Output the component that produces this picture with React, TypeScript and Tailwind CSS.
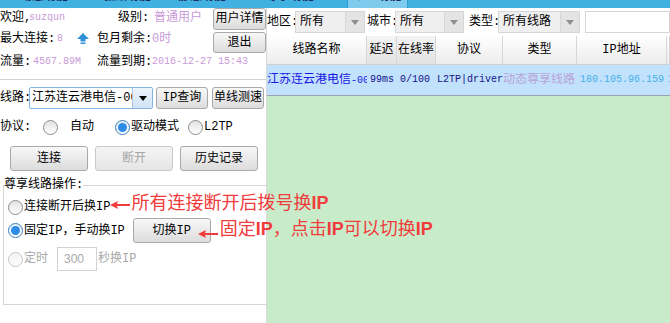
import clsx from "clsx";
import type { ReactNode } from "react";

const mono = "font-['Liberation_Mono','Noto_Sans_CJK_SC',monospace] text-[10px]";
const pink = "text-[#c99ad9]";

function Radio({ checked, disabled }: { checked?: boolean; disabled?: boolean }) {
  return (
    <span
      className={clsx(
        "flex h-[15px] w-[15px] shrink-0 items-center justify-center rounded-full border bg-gradient-to-b",
        disabled
          ? "border-[#c6c6c6] from-[#f3f3f3] to-[#fdfdfd]"
          : checked
            ? "border-[#3a7dbb] from-[#e6f0fb] to-[#ffffff]"
            : "border-[#8d8d8d] from-[#e2e2e2] to-[#ffffff]"
      )}
    >
      {checked && <span className="h-[9px] w-[9px] rounded-full bg-[#2c8ce8]" />}
    </span>
  );
}

function Btn({
  children,
  className,
  disabled,
}: {
  children: ReactNode;
  className?: string;
  disabled?: boolean;
}) {
  return (
    <button
      className={clsx(
        "flex shrink-0 items-center justify-center rounded-[3px] border bg-gradient-to-b text-[12px] leading-none",
        disabled
          ? "border-[#c9c9c9] from-[#f4f4f4] to-[#e6e6e6] text-[#a6a6a6]"
          : "border-[#a9a9a9] from-[#f8f8f8] to-[#dcdcdc] text-black",
        className
      )}
    >
      {children}
    </button>
  );
}

// 红色标注箭头
function RedArrow({ className }: { className?: string }) {
  return (
    <svg className={clsx("relative z-10 shrink-0", className)} width="20" height="8" viewBox="0 0 20 8">
      <polygon points="0,4 8,0 7,3 20,3 20,5 7,5 8,8" fill="#f03c3c" />
    </svg>
  );
}

function UpArrow() {
  return (
    <svg width="12" height="11" viewBox="0 0 12 11">
      <polygon points="6,0 12,6 8.5,6 8.5,8.5 3.5,8.5 3.5,6 0,6" fill="#2f8fd8" />
      <rect x="3.5" y="9.5" width="5" height="1.5" fill="#2f8fd8" />
    </svg>
  );
}

function FilterSelect({ value, width }: { value: string; width: string }) {
  return (
    <div className={clsx("flex h-[22px] shrink-0 border border-[#d6d6d6] bg-[#efefef]", width)}>
      <span className="flex flex-1 items-center pl-[4px] text-[12px]">{value}</span>
      <span className="flex w-[19px] shrink-0 items-center justify-center border-l border-[#d8d8d8] bg-[#e4e4e4]">
        <span className="h-0 w-0 border-x-[4px] border-t-[5px] border-x-transparent border-t-[#8e8e8e]" />
      </span>
    </div>
  );
}

const cols = ["w-[100px]", "w-[30px]", "w-[39px]", "w-[67px]", "w-[74px]", "w-[90px]", "flex-1"];

function Label({ w, children, className }: { w: string; children: ReactNode; className?: string }) {
  return <span className={clsx("shrink-0", w, className)}>{children}</span>;
}

function TopStrip() {
  return (
    <div className="h-[8px] overflow-hidden bg-[#41b1e2]">
      <div className="-mt-[10px] flex h-[18px] items-start text-[12px] font-bold leading-[14px] text-[#1c2c5c]">
        <span className="ml-[20px]">动态功能</span>
        <span className="ml-[35px]">极致功能</span>
        <span className="ml-[27px]">静态功能</span>
        <span className="ml-[40px]">尊享功能</span>
        <span className="ml-[33px] flex h-full w-[61px] justify-center border-x border-[#2f9ad0] bg-[#7ecbee]">
          个人功能
        </span>
      </div>
    </div>
  );
}

function LeftPanel() {
  return (
    <div className="w-[267px] shrink-0 border-r border-[#d9d9d9] bg-white">
      {/* 用户信息 */}
      <div className="flex h-[72px] border-b border-[#d4d4d4]">
        <div className="min-w-0 flex-1">
          <div className="flex h-[19px] items-center">
            <Label w="w-[29px]">欢迎,</Label>
            <Label w="w-[89px]" className={clsx(mono, pink)}>suzqun</Label>
            <Label w="w-[36px]">级别:</Label>
            <span className={pink}>普通用户</span>
          </div>
          <div className="flex h-[23px] items-center">
            <Label w="w-[57px]">最大连接:</Label>
            <Label w="w-[20px]" className={clsx(mono, pink)}>8</Label>
            <Label w="w-[20px]" className="flex">
              <UpArrow />
            </Label>
            <Label w="w-[55px]">包月剩余:</Label>
            <span className={pink}>0时</span>
          </div>
          <div className="flex h-[23px] items-center">
            <Label w="w-[33px]">流量:</Label>
            <Label w="w-[64px]" className={clsx(mono, pink)}>4567.89M</Label>
            <Label w="w-[55px]">流量到期:</Label>
            <span className={clsx(mono, pink)}>2016-12-27 15:43</span>
          </div>
        </div>
        <div className="flex w-[53px] shrink-0 flex-col gap-[2px]">
          <Btn className="h-[22px]">用户详情</Btn>
          <Btn className="h-[21px]">退出</Btn>
        </div>
      </div>

      {/* 线路 */}
      <div className="mt-[7px] flex h-[22px] items-center">
        <Label w="w-[29px]">线路:</Label>
        <div className="flex h-full w-[124px] shrink-0 overflow-hidden rounded-[2px] border border-[#82b4e6] bg-white">
          <span className="flex min-w-0 flex-1 items-center overflow-hidden pl-[2px] text-[12px]">
            江苏连云港电信-00
          </span>
          <span className="flex w-[20px] shrink-0 items-center justify-center border-l border-[#a8c8e8] bg-gradient-to-b from-[#eef5fc] to-[#cfe2f5]">
            <span className="h-0 w-0 border-x-[4px] border-t-[5px] border-x-transparent border-t-black" />
          </span>
        </div>
        <Btn className="ml-[3px] h-full w-[52px]">IP查询</Btn>
        <Btn className="ml-[4px] h-full w-[52px]">单线测速</Btn>
      </div>

      {/* 协议 */}
      <div className="mt-[9px] flex h-[18px] items-center">
        <Label w="w-[43px]">协议:</Label>
        <Radio />
        <Label w="w-[45px]" className="ml-[12px]">自动</Label>
        <Radio checked />
        <Label w="w-[57px]" className="ml-[1px]">驱动模式</Label>
        <Radio />
        <span className="ml-[1px]">L2TP</span>
      </div>

      <div className="mt-[10px] flex h-[25px] gap-[7px] pl-[10px]">
        <Btn className="h-full w-[78px]">连接</Btn>
        <Btn className="h-full w-[78px]" disabled>
          断开
        </Btn>
        <Btn className="h-full w-[78px]">历史记录</Btn>
      </div>

      {/* 尊享线路操作 */}
      <fieldset className="mt-[7px] ml-[3px] h-[127px] w-[260px] border border-[#d5d5d5]">
        <legend className="text-[12px] leading-[14px]">尊享线路操作:</legend>
        <div className="mt-[5px] flex h-[20px] items-center pl-[4px]">
          <Radio />
          <span className="ml-[1px] shrink-0">连接断开后换IP</span>
          <RedArrow className="-mt-[4px]" />
          <span className="relative z-10 -mt-[8px] ml-[1px] shrink-0 font-['Liberation_Sans','Noto_Sans_CJK_SC',sans-serif] text-[18px] leading-[22px] text-[#f03c3c]">
            所有连接断开后拨号换<b>IP</b>
          </span>
        </div>
        <div className="mt-[1px] flex h-[25px] items-center pl-[4px]">
          <Radio checked />
          <span className="ml-[1px] shrink-0">固定IP，手动换IP</span>
          <Btn className="ml-[8px] h-full w-[78px]">切换IP</Btn>
          <RedArrow className="-ml-[13px] mt-[6px]" />
          <span className="relative z-10 -mt-[4px] ml-[2px] shrink-0 font-['Liberation_Sans','Noto_Sans_CJK_SC',sans-serif] text-[18px] leading-[22px] text-[#f03c3c]">
            固定<b>IP</b>，点击<b>IP</b>可以切换<b>IP</b>
          </span>
        </div>
        <div className="mt-[4px] flex h-[24px] items-center pl-[4px] text-[#a8a8a8]">
          <Radio disabled />
          <Label w="w-[33px]" className="ml-[1px]">定时</Label>
          <span className="flex h-full w-[40px] shrink-0 items-center border border-[#d2d2d2] pl-[6px] font-['Liberation_Sans',sans-serif] text-[12px]">
            300
          </span>
          <span className="ml-[1px] shrink-0">秒换IP</span>
        </div>
      </fieldset>
    </div>
  );
}

function RightPanel() {
  return (
    <div className="flex min-w-0 flex-1 flex-col">
      <div className="flex h-[28px] items-start bg-white pt-[3px]">
        <Label w="w-[28px]" className="flex h-[22px] items-center">地区:</Label>
        <FilterSelect value="所有" width="w-[70px]" />
        <Label w="w-[28px]" className="ml-[2px] flex h-[22px] items-center">城市:</Label>
        <FilterSelect value="所有" width="w-[69px]" />
        <Label w="w-[29px]" className="ml-[5px] flex h-[22px] items-center">类型:</Label>
        <FilterSelect value="所有线路" width="w-[82px]" />
        <span className="ml-[5px] h-[22px] min-w-0 flex-1 border border-[#d6d6d6] bg-white" />
      </div>

      <div className="flex h-[29px] border-b border-[#cfcfcf]">
        {["线路名称", "延迟", "在线率", "协议", "类型", "IP地址", ""].map((h, i) => (
          <div
            key={i}
            className={clsx(
              "flex shrink-0 items-center justify-center overflow-hidden border-r border-[#d6d6d6] bg-gradient-to-b",
              i === 1 || i === 2 ? "from-[#f4f4f4] to-[#e2e2e2]" : "from-[#ffffff] to-[#ececec]",
              cols[i]
            )}
          >
            {h}
          </div>
        ))}
      </div>

      <div className="flex h-[31px] items-center border-b border-[#9aa4ae] bg-[#c2e1fc]">
        <span className={clsx("shrink-0 overflow-hidden text-[#1818e4]", cols[0])}>
          江苏连云港电信<span className="font-['Liberation_Mono',monospace] text-[10px]">-00</span>
        </span>
        <span className={clsx("shrink-0 overflow-hidden pl-[3px] text-[#12128a]", mono, cols[1])}>99ms</span>
        <span className={clsx("shrink-0 overflow-hidden pl-[3px] text-[#12128a]", mono, cols[2])}>0/100</span>
        <span className={clsx("shrink-0 overflow-hidden pl-[1px] text-[#12128a]", mono, cols[3])}>L2TP|driver</span>
        <span className={clsx("shrink-0 overflow-hidden text-[#b8a4d8]", cols[4])}>动态尊享线路</span>
        <span className={clsx("shrink-0 overflow-hidden pl-[3px] text-[#44b2e6]", mono, cols[5])}>180.105.96.159</span>
        <span className={clsx("overflow-hidden pl-[1px] text-[#44b2e6]", mono, cols[6])}>1</span>
      </div>

      <div className="flex-1 bg-[#c8ecca]" />
    </div>
  );
}

export default function App() {
  return (
    <div className="h-[323px] w-[670px] overflow-hidden whitespace-nowrap bg-white font-['Liberation_Mono','Noto_Sans_CJK_SC',monospace] text-[12px] leading-[14px] text-black">
      <TopStrip />
      <div className="flex h-[315px]">
        <LeftPanel />
        <RightPanel />
      </div>
    </div>
  );
}
